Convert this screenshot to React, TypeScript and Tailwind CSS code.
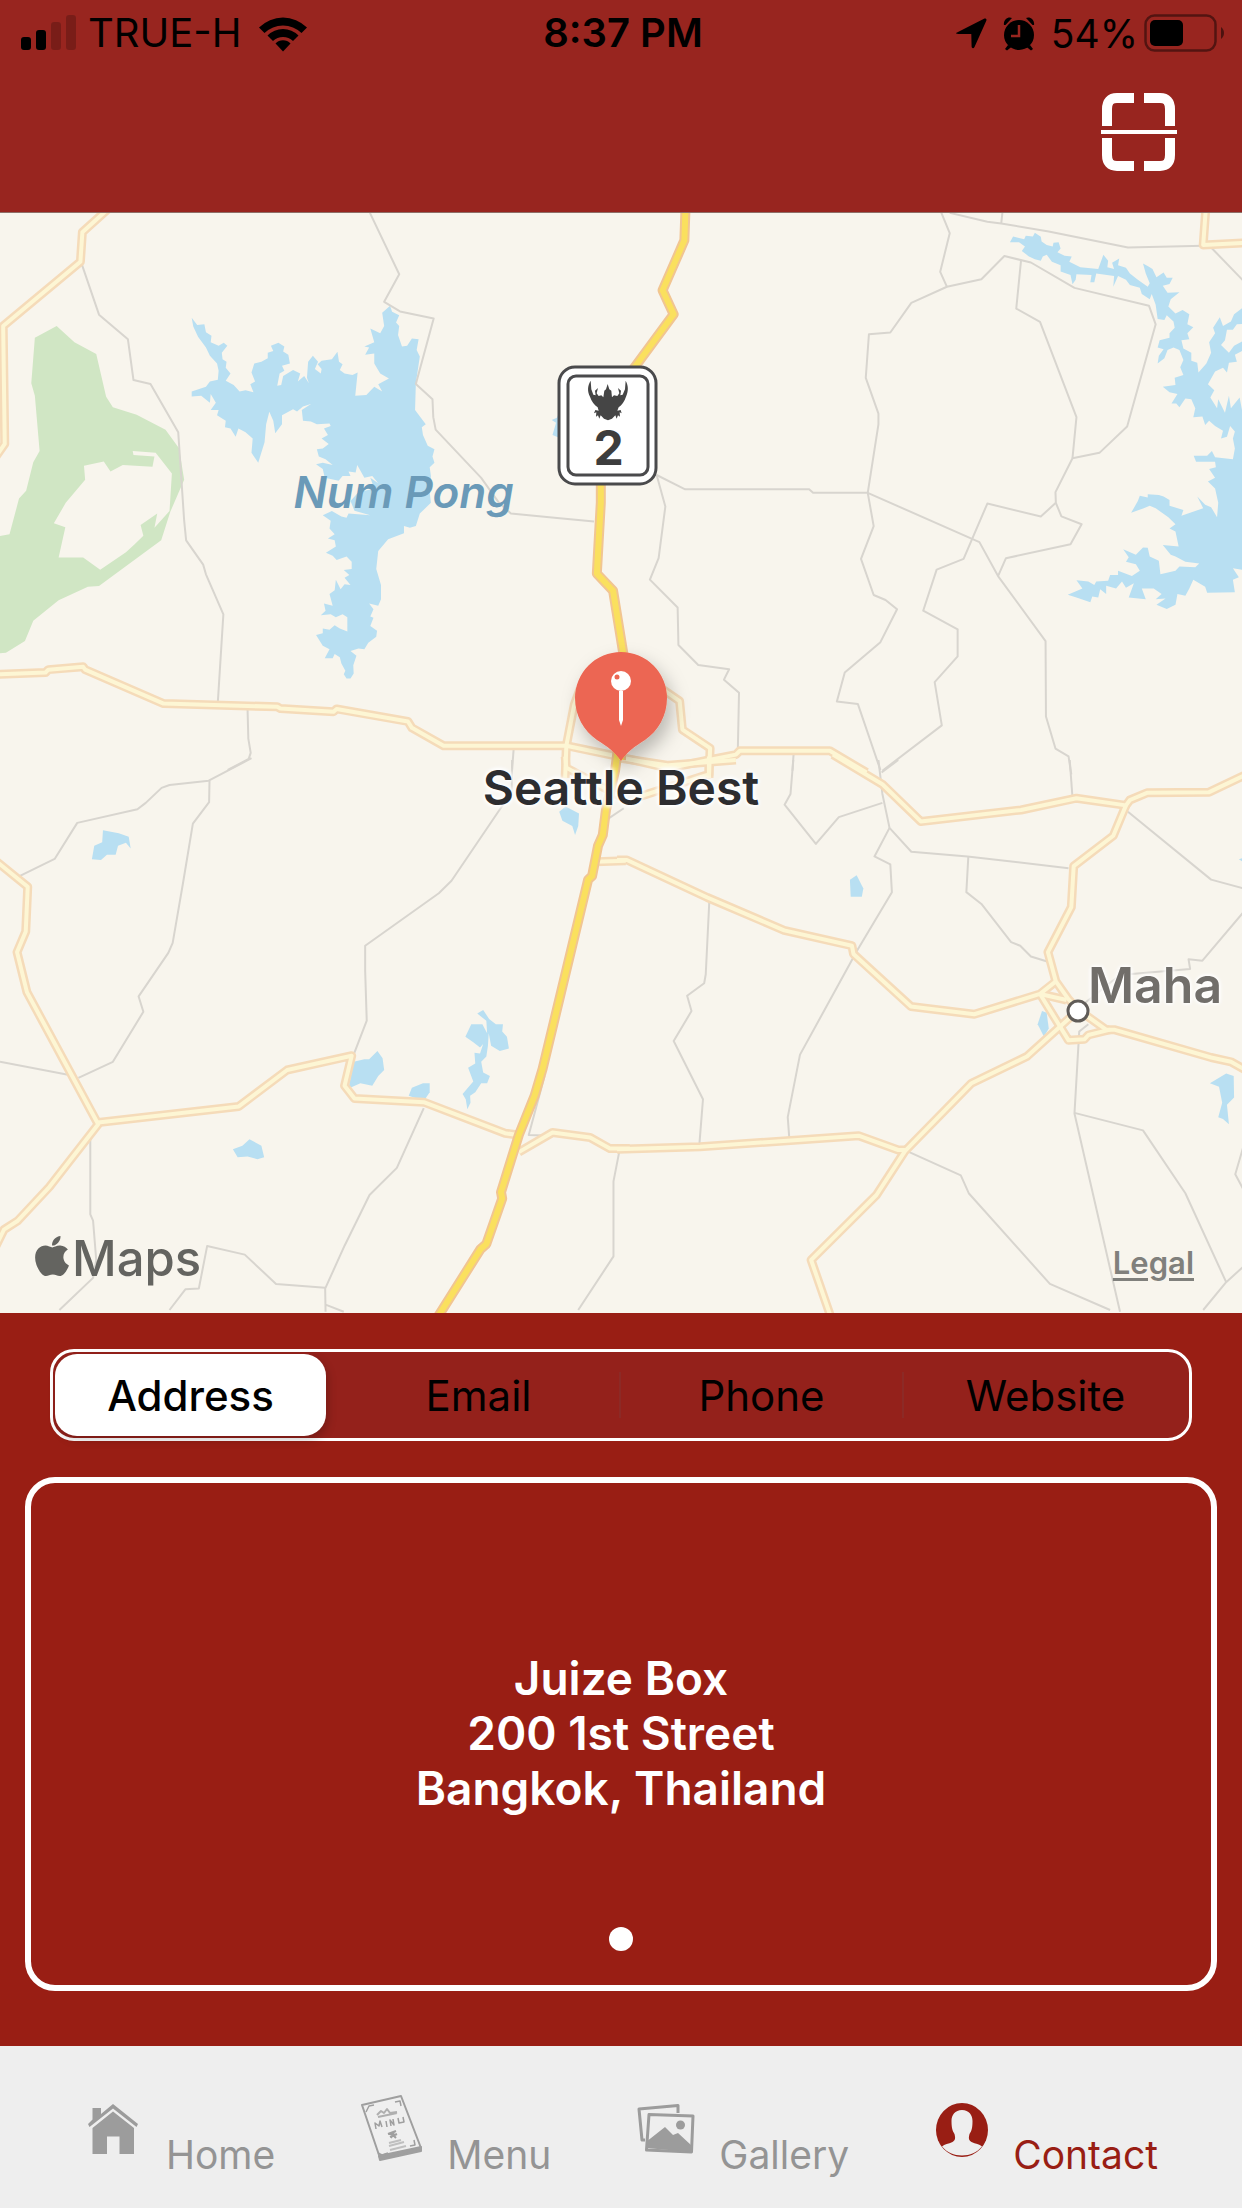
import React, { useState } from "react";
import { FaApple } from "react-icons/fa";

type Tile = {
  transform: string;
  park?: string;
  water: string[];
  minor: string[];
  road: string[];
  highway: string[];
};

/* The map is stored as four vector tiles, each on a 1568-unit square grid. */
const TILES: Tile[] = [
  {
    transform: "translate(0 -3) scale(0.39605 0.35714)",
    park: "M-10 915L24 908 48 808 66 786 84 706 100 675 88 520 79 485 88 358 143 325 188 370 243 403 268 523 285 552 345 573 418 615 452 667 465 755 430 845 407 925 250 1053 222 1055 148 1093 84 1150 63 1207 15 1240 -10 1242ZM212 716L262 704 279 732 310 714 385 719 390 690 337 686 335 675 393 680 434 738 428 843 390 890 397 850 355 882 362 912 340 936 318 958 253 1007 210 973 148 973 165 888 136 877 166 820 215 755Z",
    water: [
      "M484 302L498 322 516 320 520 342 534 352 532 370 552 380 565 372 574 380 560 400 562 418 572 425 570 442 582 458 570 478 590 490 605 508 620 505 640 510 632 488 644 480 635 455 642 430 660 425 676 415 676 400 690 395 684 380 703 372 718 382 715 396 728 405 732 430 712 436 718 450 706 458 700 492 710 490 715 465 740 448 758 458 752 480 768 465 780 485 775 470 778 425 790 408 803 425 795 445 810 458 812 445 802 432 812 422 838 418 852 397 856 425 865 432 858 448 870 458 890 462 903 455 897 520 925 518 945 495 965 508 955 488 982 472 960 458 945 430 945 402 922 405 932 385 920 382 945 370 935 332 960 345 970 325 965 288 985 268 990 285 1008 295 1000 315 1008 325 1005 350 1015 382 1028 380 1040 360 1057 362 1052 392 1060 410 1050 485 1048 560 1075 600 1065 608 1068 630 1080 660 1097 670 1092 690 1097 708 1085 720 1088 745 1085 790 1088 820 1060 850 1050 885 1035 890 1020 885 1020 905 980 922 955 955 950 1005 962 1050 962 1090 955 1108 932 1102 943 1118 935 1138 943 1142 935 1165 952 1178 950 1195 930 1212 920 1230 905 1228 885 1235 900 1248 892 1275 893 1298 885 1312 875 1312 868 1300 872 1290 862 1270 858 1252 845 1243 840 1255 820 1255 832 1230 815 1220 798 1190 815 1185 815 1172 832 1175 845 1163 858 1172 877 1180 877 1140 865 1132 848 1140 835 1132 810 1135 822 1122 818 1102 840 1108 832 1075 845 1065 848 1035 860 1062 870 1048 885 1050 870 1030 882 1022 868 1008 888 1005 888 985 875 970 850 980 840 968 823 960 848 942 845 925 828 920 845 908 832 892 835 870 815 855 838 843 862 858 875 862 880 850 935 855 895 842 885 815 905 790 945 780 935 750 955 765 940 745 920 750 902 714 898 735 880 732 885 745 865 745 855 758 820 750 815 725 798 712 815 708 840 714 822 698 805 690 800 670 815 668 830 655 812 640 828 630 818 612 835 605 832 598 800 600 785 592 765 590 762 560 785 543 765 550 750 564 740 558 712 575 712 600 695 625 690 590 680 565 672 600 668 650 652 708 635 680 638 640 620 622 602 612 595 635 582 612 568 608 570 590 548 575 552 560 532 560 545 540 532 515 530 540 508 520 484 522 484 508 520 495 530 480 550 475 552 450 548 430 530 408 520 385 500 355 488 326Z",
      "M1412 568L1406 582 1393 588 1404 596 1395 630 1412 638Z",
    ],
    minor: [
      "M934 8L1008 180 970 257 1010 284 1095 304 1050 487 1092 530 1094 580 1100 615 1215 750 1260 820 1290 850 1400 862 1500 872",
      "M206 150L250 293 323 362 337 476 380 487 450 622 465 870 470 925 513 993 520 1020 564 1132 550 1378",
      "M625 1395L627 1480 633 1520 628 1537 575 1568",
      "M1297 1508L1293 1568",
    ],
    road: [
      "M280 -10L208 62 203 145 8 325 12 655 -10 690",
      "M-10 1300L115 1295 122 1287 210 1279 215 1287 413 1382 700 1391 708 1396 842 1405 850 1397 1030 1432 1040 1450 1120 1500 1430 1500 1560 1530",
      "M1465 1340L1450 1385 1430 1500 1427 1590",
    ],
    highway: ["M1517 770L1517 820 1507 1018 1548 1066 1575 1250 1568 1540"],
  },
  {
    transform: "translate(621 -3) scale(0.39605 0.35714)",
    water: [
      "M982 90L990 74 1018 82 1022 72 1040 74 1045 64 1060 75 1062 88 1075 98 1090 102 1092 92 1105 90 1110 108 1102 118 1120 128 1138 130 1132 145 1160 160 1205 165 1218 125 1230 142 1228 160 1245 165 1240 148 1258 136 1255 155 1275 162 1285 178 1305 195 1330 215 1335 205 1325 178 1318 150 1332 158 1342 165 1352 188 1370 175 1378 190 1393 190 1385 207 1368 212 1380 232 1410 230 1388 250 1382 270 1400 290 1418 280 1435 292 1430 320 1445 328 1430 345 1435 362 1415 365 1420 388 1440 400 1440 422 1455 428 1458 455 1478 430 1490 400 1485 370 1500 345 1495 330 1512 300 1520 325 1540 312 1548 292 1568 275 1580 268 1580 318 1555 320 1545 335 1530 335 1525 365 1515 378 1535 400 1548 380 1568 368 1580 365 1580 388 1550 405 1555 425 1535 428 1530 455 1520 442 1500 452 1482 488 1498 505 1488 525 1505 555 1508 530 1525 568 1535 520 1540 555 1562 525 1568 560 1580 540 V1010 L1545 1003 1560 1028 1545 1035 1550 1070 1480 1072 1475 1055 1445 1035 1435 1060 1425 1080 1405 1075 1400 1105 1378 1117 1352 1105 1375 1088 1350 1090 1365 1075 1345 1060 1315 1060 1325 1090 1282 1085 1295 1045 1275 1058 1265 1040 1250 1060 1225 1052 1225 1075 1210 1062 1205 1085 1190 1082 1185 1098 1150 1085 1128 1077 1165 1060 1150 1037 1180 1040 1195 1050 1200 1040 1230 1038 1235 1022 1255 1022 1255 1010 1290 1025 1310 1010 1300 992 1275 985 1282 972 1268 950 1300 965 1318 945 1330 946 1335 970 1358 982 1362 1020 1400 1010 1410 998 1450 1000 1460 990 1425 985 1400 970 1388 965 1368 938 1408 942 1400 900 1385 892 1400 880 1382 860 1350 835 1335 828 1320 835 1288 848 1305 815 1310 800 1330 805 1330 796 1358 798 1370 802 1385 812 1385 828 1420 840 1415 856 1470 835 1455 802 1475 825 1490 832 1505 860 1508 820 1500 780 1482 760 1500 750 1485 725 1502 720 1500 705 1452 705 1446 688 1480 688 1492 675 1500 692 1545 698 1550 668 1545 640 1550 620 1538 605 1530 635 1515 640 1520 618 1500 605 1485 590 1475 602 1468 578 1445 580 1450 555 1440 530 1425 528 1410 552 1402 542 1390 542 1405 515 1385 510 1368 495 1400 490 1398 470 1420 462 1412 440 1420 420 1410 392 1395 385 1380 392 1372 415 1355 430 1358 408 1370 390 1355 385 1360 365 1385 358 1385 345 1398 330 1395 312 1378 295 1372 308 1355 305 1350 265 1340 235 1335 250 1315 235 1310 218 1285 210 1275 195 1255 185 1243 215 1245 185 1200 178 1195 202 1185 202 1188 182 1150 180 1148 195 1140 208 1135 182 1110 172 1110 155 1088 145 1075 125 1065 130 1060 142 1045 138 1030 130 1012 115 1020 102 1005 90Z",
    ],
    minor: [
      "M806 0L830 65 806 173 823 215",
      "M830 8L925 33 960 38 1080 60 1280 105 1470 100",
      "M963 8L960 38",
      "M1490 105L1580 208",
      "M90 742L162 782 475 782 485 792 623 792 905 930 952 1025 1072 1207 1073 1418 1097 1508 1130 1530 1137 1580",
      "M90 742L112 830 95 975 73 1035 143 1113 145 1218 195 1274 273 1286 260 1315 298 1352 295 1510",
      "M623 792L650 600 650 570 618 470 626 348 680 343 733 260 823 215 910 194 968 129 1035 147 1145 218 1333 268 1350 320 1278 606 1208 680 1140 695 1097 790 1098 820 1112 858 1163 880 1135 936 972 975 952 1025",
      "M1010 142L998 276 1058 313 1150 580 1140 695",
      "M1098 820L1060 858 925 822 865 977 797 1007 763 1122 850 1174 850 1250 792 1322 810 1443 660 1570",
      "M623 792L638 885 606 977 638 1078 668 1092 697 1118 655 1210 565 1295 545 1376 598 1383 655 1568",
      "M436 1520L433 1570",
    ],
    road: [
      "M1477 -10L1470 98 1580 92",
      "M100 1338L148 1375 155 1455 225 1507 222 1590",
      "M-10 1530L120 1563 222 1540 290 1525 300 1514 527 1514 620 1575",
    ],
    highway: ["M163 -10L160 85 105 225 133 292 40 432 20 462"],
  },
  {
    transform: "translate(0 547) scale(0.39605 0.35714)",
    water: [
      "M260 197L300 205 325 215 330 248 318 232 298 240 292 265 270 265 255 280 232 278 238 240 258 230Z",
      "M1428 130L1462 150 1460 185 1452 210 1445 185 1420 170 1412 145Z",
      "M1220 700L1235 725 1252 740 1270 740 1268 760 1280 775 1285 808 1262 815 1240 800 1234 765 1232 800 1228 830 1215 845 1220 875 1237 885 1230 905 1215 905 1200 930 1187 940 1188 960 1180 978 1176 950 1168 935 1195 900 1182 862 1200 850 1198 820 1212 822 1220 795 1212 805 1195 790 1175 775 1190 740 1218 740 1230 765 1228 730 1205 710Z",
      "M893 845L920 838 932 838 953 815 966 835 970 868 955 885 940 912 910 905 880 920Z",
      "M1032 940L1040 918 1068 905 1085 905 1085 930 1070 955Z",
      "M588 1090L612 1080 630 1062 660 1080 667 1112 650 1118 625 1110 600 1112Z",
    ],
    minor: [
      "M635 -5L527 58 428 70 408 78 368 120 347 138 195 176 138 277 48 326",
      "M529 58L528 118 487 178 462 345 436 512 425 540 350 662 362 705 285 845 198 890",
      "M0 845L175 882",
      "M1293 0L1292 90 1258 145 1140 338 1108 373 922 520 922 590 926 730 893 825",
      "M1070 975L1002 1142 933 1218 870 1360 821 1480 822 1545M822 1525L868 1545",
      "M228 1055L228 1272 235 1290 243 1400 235 1450 150 1540",
      "M428 1540L468 1482 502 1480 523 1361 618 1385 697 1467 821 1478",
      "M1375 885L1335 1050 1390 1052",
      "M1563 1100L1549 1180 1549 1390 1460 1540",
      "M1575 135L1535 165",
    ],
    road: [
      "M-10 283L70 355 65 480 43 538 68 650 248 1020 125 1195 45 1290 10 1315 -10 1360",
      "M248 1015L603 970 725 868 888 828 870 912 895 948 1070 958 1275 1045 1308 1050",
      "M1310 1098L1395 1043 1490 1057 1540 1088 1590 1088",
      "M1427 -10L1430 22 1580 110",
      "M1505 285L1580 282",
    ],
    highway: [
      "M1560 -30L1553 30 1530 140 1522 210 1510 240 1495 325 1485 335 1370 865 1350 940 1310 1050 1265 1210 1268 1228 1228 1355 1213 1370 1105 1560",
    ],
  },
  {
    transform: "translate(621 547) scale(0.39605 0.35714)",
    water: [
      "M578 335L595 323 612 360 608 383 580 383Z",
      "M1063 703L1075 708 1080 752 1068 775 1052 740Z",
      "M1487 905L1528 878 1547 885 1548 945 1530 965 1535 1020 1520 1005 1508 1000 1518 960 1510 915Z",
      "M1580 270L1560 278 1580 292Z",
    ],
    minor: [
      "M435 0L428 95 413 125 492 235 550 160 660 120",
      "M650 0L660 95 678 190 733 257 875 270 1130 303",
      "M700 0L658 35",
      "M678 190L640 270 680 292 684 370 597 532 452 825 421 1000 425 1060",
      "M877 270L872 370 910 403 985 510 1008 520 1035 550 1078 565",
      "M223 395L214 600 210 625 167 660 178 703 133 787 207 950 198 1075",
      "M1133 0L1140 105",
      "M1280 145L1490 335 1580 362",
      "M1580 415L1468 562 1433 558 1437 585 1260 602 1160 690",
      "M1180 740L1157 760 1145 990 1260 1545",
      "M1145 988L1318 1037 1425 1213 1528 1462 1470 1540M1528 1462L1580 1410",
      "M728 1098L858 1163 878 1213 1083 1467 1235 1540",
      "M1580 1050L1551 1160 1580 1220",
    ],
    road: [
      "M-10 280L15 280 218 385 412 477 583 520 587 543 732 690 892 712 1058 655 1098 620",
      "M1058 655L1130 785 1170 782 1180 770 1235 755",
      "M1058 655L1125 672",
      "M535 -15L660 68 757 172 1010 140 1150 107 1275 127 1285 112 1328 92 1485 90 1580 40",
      "M1275 127L1243 212 1143 297 1137 412 1078 538 1098 620 1130 670 1155 700 1225 755 1245 755 1490 833 1540 845 1580 870",
      "M1155 700L1025 830 885 905 717 1095 645 1218 480 1400 530 1560",
      "M-10 1090L200 1083 600 1052 700 1092 717 1092",
      "M222 -10L222 40 20 112",
      "M0 -5L120 15 290 0",
    ],
    highway: [],
  },
];

function Lines({ kind, color, width }: { kind: "minor" | "road" | "highway"; color: string; width: number }) {
  return (
    <>
      {TILES.map((t, i) => (
        <g key={i} transform={t.transform} fill="none" stroke={color} strokeWidth={width} strokeLinejoin="round">
          {t[kind].map((d, j) => (
            <path key={j} d={d} vectorEffect="non-scaling-stroke" />
          ))}
        </g>
      ))}
    </>
  );
}

function MapDrawing() {
  return (
    <svg viewBox="0 0 1242 1100" className="block w-full h-auto bg-[#f8f5ed]" role="img" aria-label="Map around Seattle Best">
      <defs>
        <filter id="pin-shadow" x="-50%" y="-50%" width="200%" height="200%">
          <feDropShadow dx="5" dy="9" stdDeviation="9" floodColor="#000" floodOpacity="0.25" />
        </filter>
      </defs>
      {TILES.map((t, i) => (
        <g key={i} transform={t.transform}>
          {t.park && <path d={t.park} fill="#d0e6c4" fillRule="evenodd" />}
          {t.water.map((d, j) => (
            <path key={j} d={d} fill="#b8dff2" />
          ))}
        </g>
      ))}
      <Lines kind="minor" color="#d8d5cf" width={2} />
      <Lines kind="road" color="#f5dbb9" width={9} />
      <Lines kind="road" color="#fdf6d4" width={4} />
      <Lines kind="highway" color="#f1c592" width={10} />
      <Lines kind="highway" color="#fae05e" width={6} />

      <circle cx="1078" cy="798" r="10" fill="#fff" stroke="#605c58" strokeWidth="3" />

      <g transform="translate(530 137)">
        <rect x="29" y="17" width="97" height="117" rx="16" fill="#fff" stroke="#4a4a4c" strokeWidth="3" />
        <rect x="38" y="26" width="80" height="99" rx="8" fill="#fff" stroke="#4a4a4c" strokeWidth="3" />
        <path
          transform="scale(0.3333)"
          fill="#454545"
          d="M182 92C172 108 172 124 180 140 184 154 194 166 203 172L206 182 196 180 192 190 199 187 198 200 204 196 208 206 212 196 222 206 234 211 246 206 256 196 260 206 264 196 270 200 269 187 275 190 272 180 262 182 266 172C275 166 284 154 288 140 295 124 296 108 287 92L285 118 278 134 271 136 273 122 264 114 268 130 262 138 252 136 246 142 244 122 238 118 233 102 228 118 223 122 220 142 214 136 206 138 200 130 204 114 195 122 197 136 190 134 184 118Z"
        />
      </g>

      <g filter="url(#pin-shadow)">
        <path d="M621 439a46 46 0 0 1 46 46c0 18-9 33-22 42-11 7-18 12-24 21-6-9-13-14-24-21-13-9-22-24-22-42a46 46 0 0 1 46-46Z" fill="#ec6652" />
      </g>
      <circle cx="621" cy="468" r="10" fill="#fff" />
      <circle cx="617" cy="464" r="2.5" fill="#ec6652" />
      <path d="M619 478h4v29l-2 6-2-6Z" fill="#fff" />
    </svg>
  );
}

function StatusBar() {
  return (
    <div className="grid h-[66px] grid-cols-[1fr_auto_1fr] items-center pl-5 pr-4 text-[40px] leading-none text-black">
      <div className="flex items-center">
        <svg viewBox="0 0 56 36" className="h-9 w-14" aria-label="Signal strength">
          <rect x="1" y="22" width="10" height="13" rx="3" />
          <rect x="16" y="15" width="10" height="20" rx="3" />
          <rect x="31" y="7" width="10" height="28" rx="3" opacity=".2" />
          <rect x="46" y="0" width="10" height="35" rx="3" opacity=".2" />
        </svg>
        <span className="ml-3">TRUE-H</span>
        <svg viewBox="0 0 50 37" className="ml-4 h-[37px] w-[50px]" aria-label="Wi-Fi">
          <path d="M1 12.500a34 34 0 0 1 48 0l-5.500 5.500a26.500 26.500 0 0 0-37 0Z" />
          <path d="M9.500 20.500a22 22 0 0 1 31 0l-5.500 5.500a14.500 14.500 0 0 0-20 0Z" />
          <path d="M17.500 28.500a10.500 10.500 0 0 1 15 0L25 36.500Z" />
        </svg>
      </div>
      <span className="font-semibold">8:37 PM</span>
      <div className="flex items-center justify-end">
        <svg viewBox="0 0 31 31" className="h-[31px] w-[31px]" aria-label="Location">
          <path d="M1 14.500 28 .7c1.700-.8 3 .3 2.300 2L18.500 29c-.8 1.800-2.800 1.500-2.900-.5L15.300 16 2 15.900c-2-.1-2.300-.8-1-1.400Z" />
        </svg>
        <svg viewBox="0 0 32 35" className="ml-4 h-[35px] w-8" aria-label="Alarm">
          <circle cx="16" cy="19" r="15" />
          <path d="M1 9C0 4 5 0 9 2L2.500 9ZM31 9c1-5-4-9-8-7l6.500 7ZM5 29l-3 4 2 1.500 5-4ZM27 29l3 4-2 1.500-5-4Z" />
          <path d="M16 9v11H8" fill="none" stroke="#98251f" strokeWidth="2.500" />
        </svg>
        <span className="ml-4 text-[39px]">54%</span>
        <svg viewBox="0 0 82 38" className="ml-1.5 h-[38px] w-[82px]" aria-label="Battery 54 percent">
          <rect x="1.500" y="1.500" width="70" height="35" rx="9" fill="none" stroke="#000" strokeOpacity=".45" strokeWidth="2.500" />
          <rect x="6" y="6" width="33" height="26" rx="5" />
          <path d="M77 13c4 3 4 9 0 12Z" opacity=".5" />
        </svg>
      </div>
    </div>
  );
}

const HomeIcon = () => (
  <svg viewBox="0 0 50 50" className="mb-5 mr-1 h-[50px] w-[50px]" fill="#9c9c9c" aria-hidden="true">
    <path d="M25 0 50 20l-1.500 3L25 4.500 1.500 23 0 20 4.500 15.500V4H13v6Z" />
    <path d="M25 7.500 46 24v26H31.500V32.500H19V50H4.500V24Z" />
  </svg>
);

const MenuIcon = () => (
  <svg viewBox="0 0 62 68" className="mb-3 h-[68px] w-[62px]" fill="none" stroke="#9f9f9f" strokeWidth="2" strokeLinejoin="round" aria-hidden="true">
    <path d="M1 11 40 2 60 54 19 64Z" fill="#efefef" />
    <path d="M19 66 60 57v-4L18 62Z" fill="#9f9f9f" />
    <path strokeWidth="1.500" d="M5 18l3-6 5-1M34 8l5-1 1 5M17 59l4 2 6-2M49 52l5-1-1-5" />
    <path strokeWidth="2" d="M16 21l4-4 3 2 3-4 3 4 7-1M17 23l19-4" opacity=".8" />
    <path strokeWidth="1.500" d="M15 35l-1-6 4 3 1-5 2 6M25 27l1 6M30 32l-1-6 4 5-1-6M37 24l1 5 5-1-1-5" />
    <path strokeWidth="2" d="M27 40l8-3M29 43l7-3M30 39l5 5M33 38l-3 6" />
    <path strokeWidth="2" d="M28 49l12-3M28 52l15-4M29 56l16-4" opacity=".6" />
  </svg>
);

const GalleryIcon = () => (
  <svg viewBox="0 0 58 50" className="mb-5 h-[50px] w-[58px]" fill="none" stroke="#9c9c9c" strokeWidth="3" strokeLinejoin="round" aria-hidden="true">
    <path d="M8 36H5L2 5l39-3.500V9" />
    <path d="M12 10.500 56 12l-1.500 36-45-2Z" />
    <circle cx="43.500" cy="21" r="4.500" fill="#9c9c9c" stroke="none" />
    <path d="M9 44V38L28 23l8 8 5-2 13 12v7Z" fill="#9c9c9c" stroke="none" />
  </svg>
);

const ContactIcon = () => (
  <svg viewBox="0 0 54 56" className="mb-4 h-14 w-[54px]" aria-hidden="true">
    <ellipse cx="27" cy="28" rx="26" ry="27" fill="#991e14" />
    <path
      d="M27 8c7 0 10.500 5 10.500 11 0 7-1 10-3 13-1 4-1 6 2 8 4 2 8 2 10.500 4.500C42 50.500 35 53.500 27 53.500S12 50.500 7 44.500c2.500-2.500 6.500-2.500 10.500-4.500 3-2 3-4 2-8-2-3-3-6-3-13C16.500 13 20 8 27 8Z"
      fill="#eee"
    />
  </svg>
);

const NAV = [
  { label: "Home", Icon: HomeIcon },
  { label: "Menu", Icon: MenuIcon },
  { label: "Gallery", Icon: GalleryIcon },
  { label: "Contact", Icon: ContactIcon },
];

const SEGMENTS = ["Address", "Email", "Phone", "Website"];

export default function App() {
  const [segment, setSegment] = useState(0);
  const [page, setPage] = useState("Contact");

  return (
    <div className="flex min-h-screen flex-col bg-[#991e14] font-['Inter',sans-serif]">
      <header className="h-[213px] border-b border-[#8f6f68] bg-[#98251f]">
        <StatusBar />
        <div className="flex justify-end pr-16 pt-[26px]">
          <button type="button" aria-label="Scan code">
            <svg viewBox="0 0 78 80" className="h-20 w-[78px]" fill="none" stroke="#fff" strokeWidth="10">
              <path d="M7 34V17Q7 6 17 6H34M44 6H60Q70 6 70 17V34M7 46V63Q7 74 17 74H34M44 74H60Q70 74 70 63V46" />
              <path strokeWidth="4" d="M1 40H77" />
            </svg>
          </button>
        </div>
      </header>

      <section className="relative overflow-hidden">
        <MapDrawing />
        <span className="absolute left-[49%] top-[21.400%] -translate-x-1/2 -translate-y-1/2 text-5xl font-bold text-[#3d3d3d]">2</span>
        <span className="absolute left-[32.500%] top-[25.400%] -translate-x-1/2 -translate-y-1/2 whitespace-nowrap text-[44px] font-semibold italic text-[#6a9ab8]">
          Num Pong
        </span>
        <span className="absolute left-[50%] top-[52.300%] -translate-x-1/2 -translate-y-1/2 whitespace-nowrap text-[48px] font-semibold text-[#2d2d30] [text-shadow:0_0_4px_#fff,0_0_4px_#fff,0_0_6px_#fff,0_0_6px_#fff]">
          Seattle Best
        </span>
        <span className="absolute left-[87.600%] top-[70.200%] -translate-y-1/2 whitespace-nowrap text-[50px] font-semibold text-[#716e6a] [text-shadow:0_0_4px_#fff,0_0_4px_#fff,0_0_6px_#fff]">
          Maha
        </span>
        <div className="absolute bottom-[22px] left-8 flex items-center text-[49px] font-medium leading-[64px] text-[#646460]">
          <FaApple className="mb-1.5 h-[46px] w-10" aria-hidden="true" />
          <span>Maps</span>
        </div>
        <a href="#legal" className="absolute bottom-[27px] right-12 text-[31px] font-semibold text-[#80807c] underline decoration-[3px] underline-offset-4">
          Legal
        </a>
      </section>

      <main className="flex flex-1 flex-col px-[25px] pt-9">
        <div role="tablist" className="mx-[25px] flex h-[92px] rounded-[24px] border-[3px] border-white bg-[#94211b] p-0.5">
          {SEGMENTS.map((s, i) => (
            <div key={s} className="flex flex-1 items-center">
              <button
                type="button"
                role="tab"
                aria-selected={i === segment}
                onClick={() => setSegment(i)}
                className={
                  i === segment
                    ? "mr-3 h-full flex-1 rounded-[22px] bg-white text-[42px] font-medium text-black shadow-[2px_4px_10px_rgba(0,0,0,0.2)]"
                    : "h-full flex-1 text-[42px] text-black"
                }
              >
                {s}
              </button>
              {i > segment && i < SEGMENTS.length - 1 && <span className="h-[46px] w-0.5 bg-[#8c2a26]" />}
            </div>
          ))}
        </div>

        <article className="mt-9 flex h-[514px] flex-col items-center justify-between rounded-[30px] border-[6px] border-white pb-[34px] pt-[168px] text-white">
          <address className="text-center text-[46px] font-semibold not-italic leading-[55px]">
            Juize Box
            <br />
            200 1st Street
            <br />
            Bangkok, Thailand
          </address>
          <button type="button" aria-label="Page 1" className="h-6 w-6 rounded-full bg-white" />
        </article>
      </main>

      <nav className="mt-[54px] flex h-[162px] items-end justify-between bg-[#eee] pl-[88px] pr-[84px] pb-[34px]">
        {NAV.map(({ label, Icon }) => (
          <button
            key={label}
            type="button"
            onClick={() => setPage(label)}
            aria-current={page === label ? "page" : undefined}
            className={
              page === label
                ? "flex items-end gap-6 text-[39px] leading-none text-[#991e14]"
                : "flex items-end gap-6 text-[39px] leading-none text-[#949494]"
            }
          >
            <Icon />
            <span>{label}</span>
          </button>
        ))}
      </nav>
    </div>
  );
}
